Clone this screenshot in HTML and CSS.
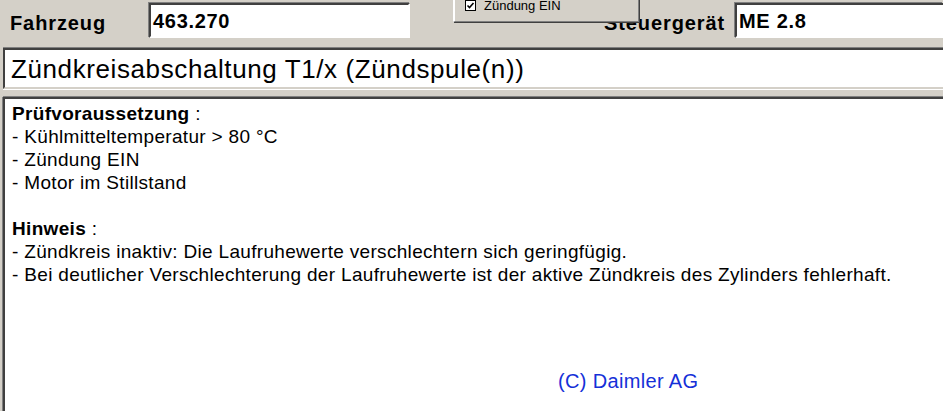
FILE: index.html
```html
<!DOCTYPE html>
<html lang="de">
<head>
    <meta charset="UTF-8">
    <title>Zündkreisabschaltung</title>
    <link rel="stylesheet" href="styles.css">
</head>
<body>
    <div class="top-row">
        <div class="field-label first">Fahrzeug</div>
        <div class="field-box vehicle">463.270</div>
        <div class="field-label second">Steuergerät</div>
        <div class="field-box unit">ME 2.8</div>

        <div class="popup">
            <span class="check">
                <svg width="11" height="11" viewBox="0 0 11 11">
                    <rect x="0.5" y="0.5" width="10" height="10" fill="#fff" stroke="#000"/>
                    <path d="M2.5 5.5 L4.5 7.5 L8.5 3" fill="none" stroke="#000" stroke-width="1.6"/>
                </svg>
            </span>
            <span>Zündung EIN</span>
        </div>
    </div>

    <div class="title-box">Zündkreisabschaltung T1/x (Zündspule(n))</div>

    <div class="info-box">
        <p><b>Prüfvoraussetzung</b> :</p>
        <p>- Kühlmitteltemperatur &gt; 80 °C</p>
        <p>- Zündung EIN</p>
        <p>- Motor im Stillstand</p>
        <p>&nbsp;</p>
        <p><b>Hinweis</b> :</p>
        <p>- Zündkreis inaktiv: Die Laufruhewerte verschlechtern sich geringfügig.</p>
        <p>- Bei deutlicher Verschlechterung der Laufruhewerte ist der aktive Zündkreis des Zylinders fehlerhaft.</p>
        <div class="copyright">(C) Daimler AG</div>
    </div>
</body>
</html>
```

FILE: styles.css
```css
* {
    margin: 0;
    padding: 0;
    box-sizing: border-box;
}

body {
    font-family: 'Liberation Sans', Arial, sans-serif;
    background-color: #d4d0c8;
    color: #000;
    width: 943px;
    height: 411px;
    overflow: hidden;
}

.top-row {
    position: relative;
    display: flex;
    align-items: flex-start;
    height: 48px;
    padding-top: 3px;
}

.field-label {
    font-size: 20px;
    font-weight: bold;
    letter-spacing: 0.9px;
    margin-top: 9px;
}

.field-label.first {
    margin-left: 10px;
    width: 139px;
}

.field-label.second {
    margin-left: 194px;
    width: 131px;
}

.field-box {
    height: 35px;
    background: #fff;
    font-size: 20px;
    font-weight: bold;
    letter-spacing: 0.7px;
    padding: 5px 0 0 2px;
    border-top: 2px solid #404040;
    border-left: 2px solid #404040;
    border-bottom: 2px solid #fff;
    border-right: 2px solid #fff;
    box-shadow: -1px -1px 0 #808080, 1px 1px 0 #d4d0c8;
}

.field-box.vehicle {
    width: 261px;
}

.field-box.unit {
    flex: 1;
    border-right: none;
}

.popup {
    position: absolute;
    left: 453px;
    top: -14px;
    width: 186px;
    height: 36px;
    background: #d4d0c8;
    border-top: 1px solid #fff;
    border-left: 2px solid #fff;
    border-right: 1px solid #808080;
    border-bottom: 1px solid #808080;
    box-shadow: 1px 1px 0 #404040;
    display: flex;
    align-items: center;
    gap: 8px;
    padding: 2px 0 0 10px;
    font-size: 13px;
    color: #000;
}

.check {
    display: flex;
}

.title-box {
    margin-left: 3px;
    height: 41px;
    background: #fff;
    font-size: 26px;
    letter-spacing: 0.6px;
    padding: 4px 0 0 6px;
    border-top: 2px solid #404040;
    border-left: 2px solid #404040;
    border-bottom: 2px solid #d4d0c8;
    box-shadow: 0 -1px 0 #808080, 0 1px 0 #fff;
    white-space: nowrap;
}

.info-box {
    margin: 8px 0 0 3px;
    height: 320px;
    background: #fff;
    font-size: 19px;
    line-height: 23px;
    letter-spacing: 0.32px;
    padding: 3px 0 0 7px;
    border-top: 2px solid #404040;
    border-left: 2px solid #404040;
    box-shadow: 0 -1px 0 #808080, -1px 0 0 #808080;
}

.info-box p {
    white-space: nowrap;
}

.copyright {
    margin: 84px 0 0 546px;
    font-size: 20px;
    letter-spacing: 0.35px;
    color: #1530d8;
}
```
